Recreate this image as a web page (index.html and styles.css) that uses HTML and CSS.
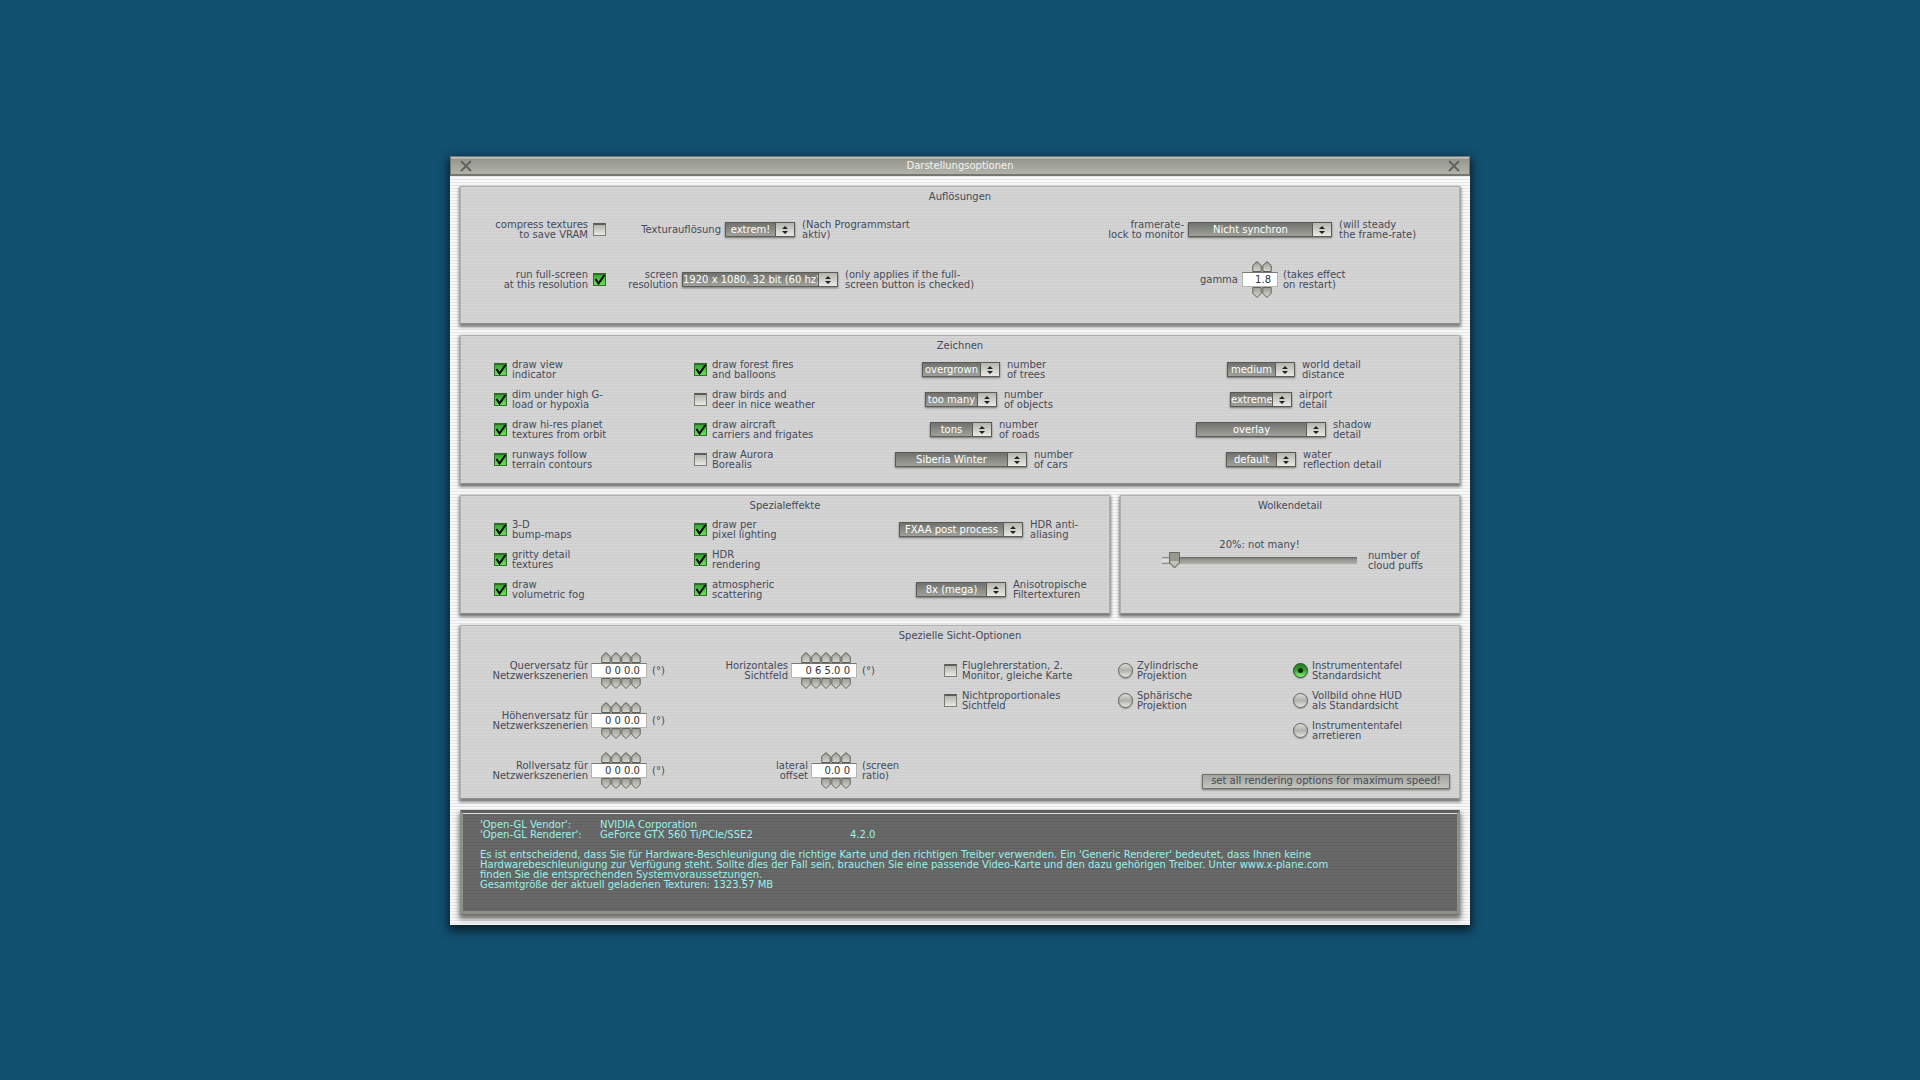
FILE: index.html
```html
<!DOCTYPE html>
<html lang="de">
<head>
<meta charset="utf-8">
<title>Darstellungsoptionen</title>
<link rel="stylesheet" href="styles.css">
</head>
<body>
<svg class="defs" width="0" height="0" aria-hidden="true">
  <defs>
    <linearGradient id="metal" x1="0" y1="0" x2="0" y2="1"><stop offset="0" stop-color="#9c9d95"/><stop offset="1" stop-color="#d6d7d1"/></linearGradient>
  </defs>
  <symbol id="up" viewBox="0 0 10 11"><path d="M.8 10.500V4.500L5 .6 9.200 4.500V10.500Z" fill="url(#metal)" stroke="#5b5d53"/></symbol>
  <symbol id="down" viewBox="0 0 10 11"><path d="M.8 .5V6.500L5 10.400 9.200 6.500V.5Z" fill="url(#metal)" stroke="#63655b"/></symbol>
  <symbol id="close" viewBox="0 0 12 12"><path d="M1 1 11 11M11 1 1 11" stroke="#62635d" stroke-width="2"/></symbol>
</svg>
<main class="window">
  <header class="titlebar">
    <button class="close" type="button" aria-label="Schließen"><svg><use href="#close"/></svg></button>
    <h1>Darstellungsoptionen</h1>
    <button class="close" type="button" aria-label="Fenster schließen"><svg><use href="#close"/></svg></button>
  </header>
  <div class="content">
    <section class="panel resolutions">
      <h2>Auflösungen</h2>
      <div class="res-row">
        <div class="check-end"><label for="vram">compress textures<br>to save VRAM</label><input type="checkbox" id="vram"></div>
        <div class="field"><label for="texres">Texturauflösung</label><select id="texres" class="w70"><option>extrem!</option></select><span>(Nach Programmstart<br>aktiv)</span></div>
        <div></div>
        <div class="field"><label for="lock">framerate-<br>lock to monitor</label><select id="lock" class="w144"><option>Nicht synchron</option></select><span>(will steady<br>the frame-rate)</span></div>
      </div>
      <div class="res-row">
        <div class="check-end"><label for="full">run full-screen<br>at this resolution</label><input type="checkbox" id="full" checked></div>
        <div class="field"><label for="screen">screen<br>resolution</label><select id="screen" class="w156"><option>1920 x 1080, 32 bit (60 hz)</option></select><span>(only applies if the full-<br>screen button is checked)</span></div>
        <div></div>
        <div class="field"><label for="gamma">gamma</label>
          <div class="spinner n2"><div class="arrows"><svg><use href="#up"/></svg><svg><use href="#up"/></svg></div><input id="gamma" type="text" value="1.8"><div class="arrows"><svg><use href="#down"/></svg><svg><use href="#down"/></svg></div></div>
          <span>(takes effect<br>on restart)</span></div>
      </div>
    </section>

    <section class="panel">
      <h2>Zeichnen</h2>
      <div class="option-grid">
        <div class="check"><input type="checkbox" id="z1" checked><label for="z1">draw view<br>indicator</label></div>
        <div class="check"><input type="checkbox" id="z2" checked><label for="z2">draw forest fires<br>and balloons</label></div>
        <div class="field"><select id="trees" class="w78"><option>overgrown</option></select><label for="trees">number<br>of trees</label></div>
        <div class="field"><select id="world" class="w68"><option>medium</option></select><label for="world">world detail<br>distance</label></div>

        <div class="check"><input type="checkbox" id="z3" checked><label for="z3">dim under high G-<br>load or hypoxia</label></div>
        <div class="check"><input type="checkbox" id="z4"><label for="z4">draw birds and<br>deer in nice weather</label></div>
        <div class="field"><select id="objects" class="w72"><option>too many</option></select><label for="objects">number<br>of objects</label></div>
        <div class="field"><select id="airport" class="w62"><option>extreme</option></select><label for="airport">airport<br>detail</label></div>

        <div class="check"><input type="checkbox" id="z5" checked><label for="z5">draw hi-res planet<br>textures from orbit</label></div>
        <div class="check"><input type="checkbox" id="z6" checked><label for="z6">draw aircraft<br>carriers and frigates</label></div>
        <div class="field"><select id="roads" class="w62"><option>tons</option></select><label for="roads">number<br>of roads</label></div>
        <div class="field"><select id="shadow" class="w130"><option>overlay</option></select><label for="shadow">shadow<br>detail</label></div>

        <div class="check"><input type="checkbox" id="z7" checked><label for="z7">runways follow<br>terrain contours</label></div>
        <div class="check"><input type="checkbox" id="z8"><label for="z8">draw Aurora<br>Borealis</label></div>
        <div class="field"><select id="cars" class="w132"><option>Siberia Winter</option></select><label for="cars">number<br>of cars</label></div>
        <div class="field"><select id="water" class="w70"><option>default</option></select><label for="water">water<br>reflection detail</label></div>
      </div>
    </section>

    <div class="split">
      <section class="panel">
        <h2>Spezialeffekte</h2>
        <div class="option-grid three">
          <div class="check"><input type="checkbox" id="s1" checked><label for="s1">3-D<br>bump-maps</label></div>
          <div class="check"><input type="checkbox" id="s2" checked><label for="s2">draw per<br>pixel lighting</label></div>
          <div class="field"><select id="hdr" class="w124"><option>FXAA post process</option></select><label for="hdr">HDR anti-<br>aliasing</label></div>

          <div class="check"><input type="checkbox" id="s3" checked><label for="s3">gritty detail<br>textures</label></div>
          <div class="check"><input type="checkbox" id="s4" checked><label for="s4">HDR<br>rendering</label></div>
          <div></div>

          <div class="check"><input type="checkbox" id="s5" checked><label for="s5">draw<br>volumetric fog</label></div>
          <div class="check"><input type="checkbox" id="s6" checked><label for="s6">atmospheric<br>scattering</label></div>
          <div class="field"><select id="aniso" class="w90"><option>8x (mega)</option></select><label for="aniso">Anisotropische<br>Filtertexturen</label></div>
        </div>
      </section>
      <section class="panel">
        <h2>Wolkendetail</h2>
        <div class="slider">
          <output for="clouds">20%: not many!</output>
          <input type="range" id="clouds" min="0" max="100" value="4">
          <label for="clouds">number of<br>cloud puffs</label>
        </div>
      </section>
    </div>

    <section class="panel view">
      <h2>Spezielle Sicht-Optionen</h2>
      <div class="view-grid">
        <div class="offsets">
          <div class="field"><label for="quer">Querversatz für<br>Netzwerkszenerien</label>
            <div class="spinner n4"><div class="arrows"><svg><use href="#up"/></svg><svg><use href="#up"/></svg><svg><use href="#up"/></svg><svg><use href="#up"/></svg></div><input id="quer" type="text" value="0 0 0.0"><div class="arrows"><svg><use href="#down"/></svg><svg><use href="#down"/></svg><svg><use href="#down"/></svg><svg><use href="#down"/></svg></div></div>
            <span>(°)</span></div>
          <div class="field"><label for="hoch">Höhenversatz für<br>Netzwerkszenerien</label>
            <div class="spinner n4"><div class="arrows"><svg><use href="#up"/></svg><svg><use href="#up"/></svg><svg><use href="#up"/></svg><svg><use href="#up"/></svg></div><input id="hoch" type="text" value="0 0 0.0"><div class="arrows"><svg><use href="#down"/></svg><svg><use href="#down"/></svg><svg><use href="#down"/></svg><svg><use href="#down"/></svg></div></div>
            <span>(°)</span></div>
          <div class="field"><label for="roll">Rollversatz für<br>Netzwerkszenerien</label>
            <div class="spinner n4"><div class="arrows"><svg><use href="#up"/></svg><svg><use href="#up"/></svg><svg><use href="#up"/></svg><svg><use href="#up"/></svg></div><input id="roll" type="text" value="0 0 0.0"><div class="arrows"><svg><use href="#down"/></svg><svg><use href="#down"/></svg><svg><use href="#down"/></svg><svg><use href="#down"/></svg></div></div>
            <span>(°)</span></div>
        </div>
        <div class="offsets ends">
          <div class="field"><label for="fov">Horizontales<br>Sichtfeld</label>
            <div class="spinner n5"><div class="arrows"><svg><use href="#up"/></svg><svg><use href="#up"/></svg><svg><use href="#up"/></svg><svg><use href="#up"/></svg><svg><use href="#up"/></svg></div><input id="fov" type="text" value="0 6 5.0 0"><div class="arrows"><svg><use href="#down"/></svg><svg><use href="#down"/></svg><svg><use href="#down"/></svg><svg><use href="#down"/></svg><svg><use href="#down"/></svg></div></div>
            <span>(°)</span></div>
          <div class="field"><label for="lat">lateral<br>offset</label>
            <div class="spinner n3"><div class="arrows"><svg><use href="#up"/></svg><svg><use href="#up"/></svg><svg><use href="#up"/></svg></div><input id="lat" type="text" value="0.0 0"><div class="arrows"><svg><use href="#down"/></svg><svg><use href="#down"/></svg><svg><use href="#down"/></svg></div></div>
            <span>(screen<br>ratio)</span></div>
        </div>
        <div class="stack inset">
          <div class="check"><input type="checkbox" id="v1"><label for="v1">Fluglehrerstation, 2.<br>Monitor, gleiche Karte</label></div>
          <div class="check"><input type="checkbox" id="v2"><label for="v2">Nichtproportionales<br>Sichtfeld</label></div>
        </div>
        <div class="modes">
          <div class="stack">
            <div class="check"><input type="radio" name="proj" id="p1"><label for="p1">Zylindrische<br>Projektion</label></div>
            <div class="check"><input type="radio" name="proj" id="p2"><label for="p2">Sphärische<br>Projektion</label></div>
          </div>
          <div class="stack">
            <div class="check"><input type="radio" name="view" id="m1" checked><label for="m1">Instrumententafel<br>Standardsicht</label></div>
            <div class="check"><input type="radio" name="view" id="m2"><label for="m2">Vollbild ohne HUD<br>als Standardsicht</label></div>
            <div class="check"><input type="radio" name="view" id="m3"><label for="m3">Instrumententafel<br>arretieren</label></div>
          </div>
          <button class="push" type="button">set all rendering options for maximum speed!</button>
        </div>
      </div>
    </section>

    <section class="info">
      <dl>
        <dt>'Open-GL Vendor':</dt><dd>NVIDIA Corporation</dd><dd></dd>
        <dt>'Open-GL Renderer':</dt><dd>GeForce GTX 560 Ti/PCIe/SSE2</dd><dd>4.2.0</dd>
      </dl>
      <p>Es ist entscheidend, dass Sie für Hardware-Beschleunigung die richtige Karte und den richtigen Treiber verwenden. Ein 'Generic Renderer' bedeutet, dass Ihnen keine<br>Hardwarebeschleunigung zur Verfügung steht. Sollte dies der Fall sein, brauchen Sie eine passende Video-Karte und den dazu gehörigen Treiber. Unter www.x-plane.com<br>finden Sie die entsprechenden Systemvoraussetzungen.<br>Gesamtgröße der aktuell geladenen Texturen: 1323.57 MB</p>
    </section>
  </div>
</main>
</body>
</html>
```
FILE: styles.css
```css
* { box-sizing: border-box; }

body {
  margin: 0;
  min-height: 100vh;
  display: flex;
  align-items: center;
  justify-content: center;
  background: #125070;
  color: #454a59;
  font: 10px/10px "DejaVu Sans", sans-serif;
  white-space: nowrap;
}

h1, h2, p, dl, dd { margin: 0; font: inherit; }
input, select, button { margin: 0; font: inherit; color: inherit; }
.defs { position: absolute; }

.window {
  width: 100%;
  max-width: 1020px;
  background: repeating-linear-gradient(#f9f9f9 0 2px, #e6e6e6 2px 3px);
  box-shadow: 0 4px 9px 2px rgba(0, 0, 0, .6);
}

.titlebar {
  display: flex;
  align-items: center;
  justify-content: space-between;
  height: 20px;
  padding: 1px 9px 0;
  border: 1px solid #74766f;
  border-bottom: 2px solid #74766f;
  background: linear-gradient(#c5c6c0 0 1px, #95968f 2px, #b2b3a9);
  color: #f4f4f0;
}
.close { display: flex; padding: 0; border: 0; background: none; }
.close svg { width: 12px; height: 12px; }

.content {
  display: flex;
  flex-direction: column;
  gap: 11px;
  padding: 10px 10px 11px;
}

.panel {
  padding: 5px 0 8px;
  border: 1px solid #b0b1ae;
  border-bottom-color: #8d8d8d;
  background: repeating-linear-gradient(#d4d4d4 0 2px, #cecece 2px 3px);
  box-shadow: 0 2px 3px 1px rgba(0, 0, 0, .5);
}
.panel h2 { margin-bottom: 4px; text-align: center; }
.resolutions { padding-bottom: 18px; }
.resolutions h2 { margin-bottom: 3px; }
.view { padding-bottom: 2px; }
.view h2 { margin-bottom: 5px; }

.split {
  display: grid;
  grid-template-columns: 65fr 34fr;
  gap: 10px;
}

/* the control sits on the column axis, its captions on either side */
.field {
  display: grid;
  grid-template-columns: minmax(0, 1fr) auto minmax(0, 1fr);
  align-items: center;
}
.field > label:first-child { grid-column: 1; margin-right: 4px; text-align: right; }
.field > select, .field > .spinner { grid-column: 2; }
.field > select + label, .field > select + span { grid-column: 3; margin-left: 7px; }
.spinner + span { margin-left: 5px; }

.res-row {
  display: grid;
  grid-template-columns: 145fr 308fr 156fr 380fr;
  height: 50px;
  padding-right: 9px;
}
.check-end { display: flex; align-items: center; justify-content: flex-end; gap: 5px; text-align: right; }

.option-grid {
  display: grid;
  grid-template-columns: 200fr 137fr 260fr 340fr;
  grid-auto-rows: 30px;
  padding: 0 28px 0 33px;
}
.three { grid-template-columns: 200fr 137fr 260fr; padding-right: 18px; }
.check { display: flex; align-items: center; gap: 5px; height: 30px; }

input[type="checkbox"] {
  appearance: none;
  flex: none;
  width: 13px;
  height: 13px;
  border: 1px solid #7b7c76;
  border-top: 2px solid #5c5d57;
  background: linear-gradient(#b5b6af, #e9e9e5);
}
input[type="checkbox"]:checked {
  border-color: #2f6b2a;
  background:
    url("data:image/svg+xml,%3Csvg xmlns='http://www.w3.org/2000/svg' viewBox='0 0 13 13'%3E%3Cpath d='M2.500 6 5.500 10.500 12.500 .5' fill='none' stroke='%23000' stroke-width='2'/%3E%3C/svg%3E") center / 13px 13px no-repeat border-box,
    linear-gradient(#2fa02a, #6fe45c) border-box;
}
input[type="radio"] {
  appearance: none;
  flex: none;
  width: 15px;
  height: 15px;
  margin-right: -1px;
  border: 1px solid #5f6159;
  border-radius: 50%;
  background: linear-gradient(#dadad6, #b1b2ab 50%, #e6e6e2);
  box-shadow: 0 1px 1px #999;
}
input[type="radio"]:checked {
  border-color: #1f4d1c;
  background: radial-gradient(circle, #0c230a 0 2px, transparent 3px), linear-gradient(#2a7a26, #35a52e 50%, #8af57b);
}

select {
  appearance: none;
  height: 15px;
  padding: 0 19px 0 0;
  border: 1px solid #5a5b55;
  border-radius: 0;
  color: #fff;
  text-align: center;
  text-align-last: center;
  text-overflow: clip;
  background:
    url("data:image/svg+xml,%3Csvg xmlns='http://www.w3.org/2000/svg' viewBox='0 0 6 8'%3E%3Cpath d='M0 3 3 0 6 3ZM0 5 3 8 6 5Z' fill='%23222'/%3E%3C/svg%3E") right 6px center / 6px 8px no-repeat,
    linear-gradient(#5a5b55, #5a5b55) right 18px top / 1px 100% no-repeat,
    linear-gradient(#b4b5ad, #e9e9e5) right / 18px 100% no-repeat,
    linear-gradient(#71726d, #a0a19b);
  box-shadow: 0 1px 2px rgba(0, 0, 0, .45);
}
.w62 { width: 62px; }
.w68 { width: 68px; }
.w70 { width: 70px; }
.w72 { width: 72px; }
.w78 { width: 78px; }
.w90 { width: 90px; }
.w124 { width: 124px; }
.w130 { width: 130px; }
.w132 { width: 132px; }
.w144 { width: 144px; }
.w156 { width: 156px; }

.spinner { display: flex; flex-direction: column; }
.spinner input {
  width: 100%;
  height: 15px;
  padding: 0 6px 0 0;
  border: 1px solid #b3b4b0;
  border-top-color: #777;
  background: #fff;
  color: #333;
  text-align: right;
}
.n2 { width: 36px; }
.n3 { width: 46px; }
.n4 { width: 56px; }
.n5 { width: 66px; }
.arrows { display: flex; justify-content: flex-end; padding-right: 6px; }
.arrows svg { width: 10px; height: 11px; }

.slider {
  display: grid;
  grid-template-columns: 195px auto;
  gap: 1px 11px;
  justify-content: start;
  align-items: center;
  padding: 25px 0 0 41px;
}
.slider output { grid-column: 1 / -1; width: 195px; text-align: center; }
.slider input {
  appearance: none;
  width: 195px;
  height: 17px;
  background:
    linear-gradient(#74766d, #dcddd7 2px, #dcddd7 5px, #74766d) left / 10px 7px no-repeat,
    linear-gradient(#62635d, #8f908b 2px, #b1b2ae) center / 100% 7px no-repeat;
}
.slider input::-webkit-slider-thumb {
  appearance: none;
  width: 11px;
  height: 17px;
  border: 0;
  border-radius: 0;
  background: url("data:image/svg+xml,%3Csvg xmlns='http://www.w3.org/2000/svg' viewBox='0 0 11 17'%3E%3Cpath d='M.5 .5H10.500V11L5.500 16 .5 11Z' fill='%23979990' stroke='%23696b62'/%3E%3Cpath d='M1.500 9H9.500V10.500L5.500 14.500 1.500 10.500Z' fill='%23c3c4bc'/%3E%3C/svg%3E") center / 11px 17px no-repeat;
}

.view-grid {
  display: grid;
  grid-template-columns: 236fr 210fr 211fr 332fr;
  padding-right: 9px;
}
.offsets { display: flex; flex-direction: column; }
.ends { justify-content: space-between; }
.offsets .field { grid-template-columns: 1fr auto 50px; height: 50px; }
.offsets .field > label:first-child { margin-right: 3px; }
.stack { padding-top: 10px; }
.inset { padding-left: 37px; }
.modes {
  display: grid;
  grid-template-columns: 175fr 157fr;
  padding-bottom: 7px;
}
.push {
  grid-column: 1 / -1;
  justify-self: end;
  align-self: end;
  width: 248px;
  height: 15px;
  padding: 0;
  border: 1px solid #6f7169;
  background: linear-gradient(#a4a59e, #c3c4be);
  box-shadow: 0 1px 2px rgba(0, 0, 0, .45);
}

.info {
  height: 104px;
  padding: 7px 17px;
  border: 3px solid #8e8f89;
  border-top-color: #5f5f5f;
  background: repeating-linear-gradient(#686868 0 2px, #616161 2px 3px);
  box-shadow: inset 0 1px #ddd, 0 4px 5px 1px rgba(0, 0, 0, .55);
  color: #98f3ea;
}
.info dl { display: grid; grid-template-columns: 120px 250px auto; margin-bottom: 10px; }
```
